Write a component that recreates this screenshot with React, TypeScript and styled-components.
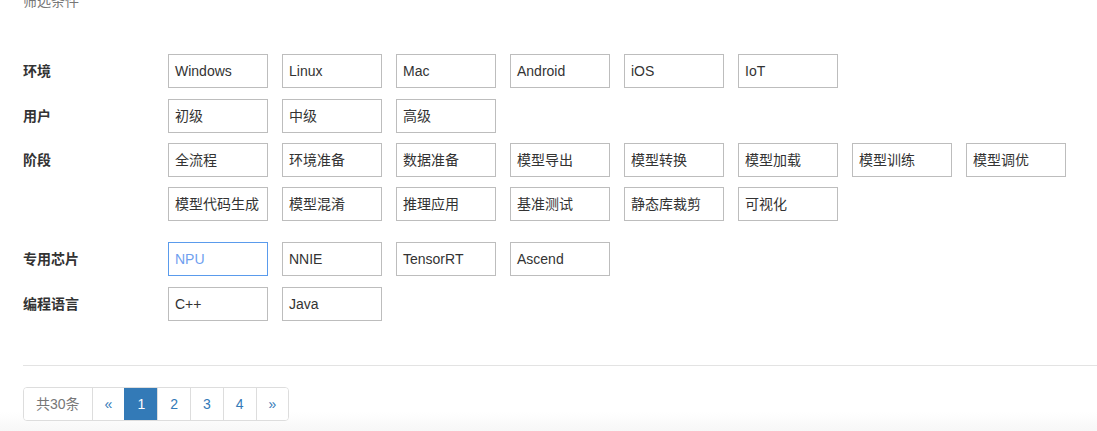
import * as React from "react"
import styled, { createGlobalStyle } from "styled-components"

const GlobalStyle = createGlobalStyle`
  html, body {
    margin: 0;
    padding: 0;
  }
  body {
    min-height: 431px;
    overflow: hidden;
    font-family: "Liberation Sans", "Noto Sans CJK SC", sans-serif;
    background: linear-gradient(to bottom, #ffffff 412px, #f5f5f5 436px);
  }
`

const filters = [
  { label: "环境", options: ["Windows", "Linux", "Mac", "Android", "iOS", "IoT"], after: 11 },
  { label: "用户", options: ["初级", "中级", "高级"], after: 10 },
  {
    label: "阶段",
    options: [
      "全流程",
      "环境准备",
      "数据准备",
      "模型导出",
      "模型转换",
      "模型加载",
      "模型训练",
      "模型调优",
      "模型代码生成",
      "模型混淆",
      "推理应用",
      "基准测试",
      "静态库裁剪",
      "可视化"
    ],
    after: 21
  },
  { label: "专用芯片", options: ["NPU", "NNIE", "TensorRT", "Ascend"], after: 11 },
  { label: "编程语言", options: ["C++", "Java"], after: 0 }
]

const pages = ["«", "1", "2", "3", "4", "»"]

export default function App() {
  const selected = "NPU"

  return (
    <Page>
      <GlobalStyle />
      <Title>筛选条件</Title>
      <Filters>
        {filters.map((group) => (
          <Group key={group.label} $after={group.after}>
            <Label>{group.label}</Label>
            <Options>
              {group.options.map((opt) => (
                <Option key={opt} $active={opt === selected}>
                  {opt}
                </Option>
              ))}
            </Options>
          </Group>
        ))}
      </Filters>
      <Divider />
      <Pagination>
        <PageItem $muted>共30条</PageItem>
        {pages.map((p) => (
          <PageItem key={p} $active={p === "1"}>
            {p}
          </PageItem>
        ))}
      </Pagination>
    </Page>
  )
}

const Page = styled.div`
  padding: 0 0 0 23px;
  display: flex;
  flex-direction: column;
`

const Title = styled.div`
  margin-top: -9px;
  font-size: 14px;
  line-height: 20px;
  color: #777;
`

const Filters = styled.div`
  margin-top: 43px;
  display: flex;
  flex-direction: column;
`

const Group = styled.div<{ $after: number }>`
  display: flex;
  align-items: flex-start;
  margin-bottom: ${(p) => p.$after}px;
`

const Label = styled.div`
  width: 145px;
  flex-shrink: 0;
  font-size: 14px;
  font-weight: bold;
  line-height: 34px;
  color: #333;
`

const Options = styled.div`
  display: flex;
  flex-wrap: wrap;
  row-gap: 10px;
  column-gap: 14px;
  width: 920px;
`

const Option = styled.div<{ $active?: boolean }>`
  box-sizing: border-box;
  width: 100px;
  height: 34px;
  padding: 0 6px;
  font-size: 14px;
  line-height: 32px;
  white-space: nowrap;
  color: ${(p) => (p.$active ? "#6fa0ef" : "#333")};
  border: 1px solid ${(p) => (p.$active ? "#5a9bec" : "#bdbdbd")};
  background: #fff;
  cursor: pointer;
`

const Divider = styled.div`
  margin-top: 44px;
  height: 1px;
  background: #e3e3e3;
`

const Pagination = styled.div`
  margin-top: 21px;
  display: flex;
  align-self: flex-start;
  border-radius: 4px;
  overflow: hidden;
  border: 1px solid #ddd;
  background: #fff;
`

const PageItem = styled.div<{ $active?: boolean; $muted?: boolean }>`
  padding: 6px 12px;
  font-size: 14px;
  line-height: 20px;
  text-align: center;
  color: ${(p) => (p.$active ? "#fff" : p.$muted ? "#777" : "#337ab7")};
  background: ${(p) => (p.$active ? "#337ab7" : "#fff")};
  border-left: 1px solid ${(p) => (p.$active ? "#337ab7" : "#ddd")};
  &:first-child {
    border-left: none;
  }
`
